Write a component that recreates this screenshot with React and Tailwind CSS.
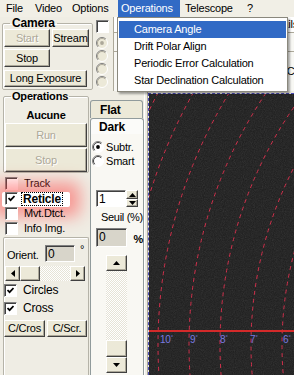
import React from 'react'

const raised =
  'bg-[#ece9d8] border border-t-white border-l-white border-r-[#404040] border-b-[#404040] shadow-[inset_-1px_-1px_0_#aca899]'
const sunken =
  'border border-t-[#808080] border-l-[#808080] border-r-white border-b-white shadow-[inset_1px_1px_0_#404040]'

function Btn({ cls, disabled, children }) {
  return (
    <div
      className={`${raised} ${cls} flex shrink-0 items-center justify-center ${
        disabled ? 'text-[#aca899] [text-shadow:1px_1px_0_#fff]' : ''
      }`}
    >
      {children}
    </div>
  )
}

function Check({ on }) {
  return (
    <span className={`${sunken} flex h-[13px] w-[13px] shrink-0 items-center justify-center bg-white`}>
      {on && (
        <svg width="7" height="7" viewBox="0 0 7 7">
          <path d="M0.5 3 L2.6 5.2 L6.5 1" stroke="#000" strokeWidth="1.7" fill="none" />
        </svg>
      )}
    </span>
  )
}

function Radio({ on, disabled }) {
  return (
    <svg width="12" height="12" viewBox="0 0 12 12" className="shrink-0">
      <circle cx="6" cy="6" r="5.5" fill={disabled ? '#ece9d8' : '#fff'} />
      <path d="M9.9 2.1 A5.5 5.5 0 0 0 2.1 9.9" stroke="#808080" fill="none" />
      <path d="M2.1 9.9 A5.5 5.5 0 0 0 9.9 2.1" stroke="#fff" fill="none" />
      <path d="M9.2 2.8 A4.5 4.5 0 0 0 2.8 9.2" stroke={disabled ? '#aca899' : '#404040'} fill="none" />
      {on && <circle cx="6" cy="6" r="1.9" fill={disabled ? '#aca899' : '#000'} />}
    </svg>
  )
}

function Arrow({ dir }) {
  const pts = {
    up: '0,4 3.5,0 7,4',
    down: '0,0 3.5,4 7,0',
    left: '4,0 0,3.5 4,7',
    right: '0,0 4,3.5 0,7',
  }[dir]
  const vert = dir === 'up' || dir === 'down'
  return (
    <svg width={vert ? 7 : 4} height={vert ? 4 : 7} viewBox={vert ? '0 0 7 4' : '0 0 4 7'}>
      <polygon points={pts} fill="#000" />
    </svg>
  )
}

const track = 'bg-[repeating-conic-gradient(#ffffff_0_25%,#e6e3d6_0_50%)] bg-[length:2px_2px]'

function MenuBar() {
  return (
    <div className="flex h-[17px] items-stretch bg-[#f1efe6]">
      <div className="flex w-[29px] items-center pl-[6px]">File</div>
      <div className="flex w-[37px] items-center pl-[6px]">Video</div>
      <div className="flex w-[52px] items-center pl-[6px]">Options</div>
      <div className="flex w-[62px] items-center bg-[#316ac5] pl-[3px] text-white">Operations</div>
      <div className="flex w-[62px] items-center pl-[5px]">Telescope</div>
      <div className="flex items-center pl-[5px]">?</div>
    </div>
  )
}

function OpsMenu() {
  const items = ['Camera Angle', 'Drift Polar Align', 'Periodic Error Calculation', 'Star Declination Calculation']
  return (
    <div className="absolute left-[117px] top-[17px] w-[171px] border border-[#8a887d] bg-white px-[1px] pb-[2px] pt-[3px] shadow-[2px_2px_2px_rgba(0,0,0,0.35)]">
      {items.map((t, i) => (
        <div
          key={t}
          className={`flex h-[17px] items-center pl-[15px] ${i === 0 ? 'bg-[#316ac5] text-white' : ''}`}
        >
          {t}
        </div>
      ))}
    </div>
  )
}

function Reticle() {
  // rings centred off to the right of the frame
  const cx = 491
  const cy = 251
  const rings = [13, 12, 11, 10, 9, 8, 7, 6, 5, 4]
  const labels = [
    [10, 11],
    [9, 41],
    [8, 71],
    [7, 101],
    [6, 134],
  ]
  return (
    <svg width="145" height="281" viewBox="0 0 145 281" className="block">
      <defs>
        <filter id="grain" x="0" y="0" width="100%" height="100%">
          <feTurbulence type="fractalNoise" baseFrequency="0.9" numOctaves="2" seed="4" />
          <feColorMatrix type="saturate" values="0" />
        </filter>
      </defs>
      <rect width="145" height="281" fill="#1c1c1c" />
      <rect width="145" height="281" filter="url(#grain)" opacity="0.15" />
      {rings.map((n) => (
        <circle
          key={n}
          cx={cx}
          cy={cy}
          r={482 - (10 - n) * 31}
          fill="none"
          stroke="#d3304c"
          strokeWidth="1"
          strokeDasharray="4 4"
        />
      ))}
      <rect x="0" y="236" width="145" height="2" fill="#d42a2a" />
      {labels.map(([n, x]) => (
        <text key={n} x={x} y={249} fontSize="10" fill="#7a7ae0" fontFamily="Liberation Sans, Arial, sans-serif">
          {n}
          <tspan fontSize="6" dy="-4">
            °
          </tspan>
        </text>
      ))}
    </svg>
  )
}

export default function App() {
  return (
    <div className="relative h-[375px] w-[294px] select-none overflow-hidden bg-[#efede4] font-['Liberation_Sans',Arial,sans-serif] text-[11px] leading-none tracking-[-0.2px] text-black">
      <MenuBar />

      {/* top strip: camera + panels under the menu */}
      <div className="flex h-[74px]">
        <fieldset className="ml-[2px] h-[73px] w-[91px] min-w-0 rounded-[2px] border border-[#b5b3a8] px-[1px] shadow-[inset_1px_1px_0_#fff]">
          <legend className="ml-[6px] px-[2px] text-[12px] font-bold leading-[13px]">Camera</legend>
          <div className="-mt-[1px] flex gap-[2px]">
            <Btn cls="h-[18px] w-[46px]" disabled>
              Start
            </Btn>
            <Btn cls="h-[18px] w-[37px]">Stream</Btn>
          </div>
          <Btn cls="mt-[2px] h-[18px] w-[46px]">Stop</Btn>
          <Btn cls="mt-[3px] h-[17px] w-[83px]">Long Exposure</Btn>
        </fieldset>

        <div className="flex w-[21px] flex-col items-start border-r border-[#aca899] pl-[3px]">
          <span className="mt-[3px]">
            <Check />
          </span>
          <div className="mt-[4px] flex flex-col gap-[1px]">
            <Radio on disabled />
            <Radio disabled />
            <Radio disabled />
            <Radio disabled />
          </div>
        </div>

        <div className="flex flex-1 flex-col overflow-hidden bg-[#f8f8f4]">
          <div className="flex h-[16px] items-center justify-end border-b border-[#aca899] bg-white">
            <span className="-mr-[4px]">Details</span>
          </div>
          <div className="h-[19px] border-b border-[#aca899]" />
          <div className="flex flex-1 items-center justify-end">
            <span className="-mr-[22px]">Calcul</span>
          </div>
        </div>
      </div>

      {/* main area */}
      <div className="flex h-[284px]">
        {/* left column */}
        <div className="flex w-[90px] flex-col">
          <fieldset className="ml-[3px] w-[86px] min-w-0 rounded-[2px] border border-[#b5b3a8] px-[1px] shadow-[inset_1px_1px_0_#fff]">
            <legend className="ml-[6px] px-[1px] font-bold leading-[11px]">Operations</legend>
            <div className="mt-[8px] text-center font-bold">Aucune</div>
            <Btn cls="mt-[2px] h-[24px] w-[82px]" disabled>
              Run
            </Btn>
            <Btn cls="mt-[1px] h-[24px] w-[82px]" disabled>
              Stop
            </Btn>
          </fieldset>

          <div className="mt-[4px] flex flex-col pl-[5px]">
            <div className="flex h-[15px] items-start gap-[6px]">
              <Check />
              <span className="leading-[13px]">Track</span>
            </div>
            <div className="-ml-[3px] flex h-[15px] w-[68px] items-start gap-[3px] rounded-[2px] bg-white pl-[3px] shadow-[0_0_16px_10px_rgba(255,70,70,0.5)]">
              <Check on />
              <span className="border border-dotted border-black px-[1px] text-[12px] font-bold leading-[12px]">
                Reticle
              </span>
            </div>
            <div className="flex h-[15px] items-start gap-[6px]">
              <Check />
              <span className="leading-[13px]">Mvt.Dtct.</span>
            </div>
            <div className="flex h-[15px] items-start gap-[6px]">
              <Check />
              <span className="leading-[13px]">Info Img.</span>
            </div>
          </div>

          <div className="ml-[3px] flex w-[86px] flex-1 flex-col rounded-t-[2px] border border-b-0 border-[#b5b3a8] shadow-[inset_1px_1px_0_#fff]">
            <div className="mt-[7px] flex items-start">
              <span className="ml-[3px] mt-[5px] w-[38px]">Orient.</span>
              <div className={`${sunken} h-[17px] w-[30px] bg-[#d8d5ca] pl-[2px] pt-[2px] text-[12px]`}>0</div>
              <span className="-mt-[1px] ml-[5px]">°</span>
            </div>
            <div className="ml-[1px] mt-[4px] flex h-[15px] w-[80px]">
              <Btn cls="h-[15px] w-[15px]">
                <Arrow dir="left" />
              </Btn>
              <Btn cls="h-[15px] w-[20px]" />
              <div className={`flex-1 ${track}`} />
              <Btn cls="h-[15px] w-[15px]">
                <Arrow dir="right" />
              </Btn>
            </div>
            <div className="mt-[3px] flex h-[18px] items-start gap-[6px]">
              <Check on />
              <span className="text-[12px] leading-[13px]">Circles</span>
            </div>
            <div className="flex h-[18px] items-start gap-[6px]">
              <Check on />
              <span className="text-[12px] leading-[13px]">Cross</span>
            </div>
            <div className="flex gap-[2px]">
              <Btn cls="h-[17px] w-[41px]">C/Cros</Btn>
              <Btn cls="h-[17px] w-[40px]">C/Scr.</Btn>
            </div>
          </div>
        </div>

        {/* middle column: tabs */}
        <div className="flex w-[54px] flex-col pt-[9px]">
          <div className="h-[18px] w-[53px] rounded-t-[3px] border border-b-0 border-[#919b9c] bg-[#ece9d8] pl-[9px] pt-[3px] text-[12px] font-bold">
            Flat
          </div>
          <div className="h-[16px] w-[54px] rounded-t-[3px] border border-b-0 border-[#919b9c] bg-[#fbfbf9] pl-[8px] pt-[2px] text-[12px] font-bold">
            Dark
          </div>
          <div className="flex flex-1 flex-col border-x border-[#919b9c] bg-[#f9f8f3] pl-[1px]">
            <div className="mt-[7px] flex h-[14px] items-start gap-[2px]">
              <Radio on />
              <span className="leading-[12px]">Subtr.</span>
            </div>
            <div className="flex h-[14px] items-start gap-[2px]">
              <Radio />
              <span className="leading-[12px]">Smart</span>
            </div>

            <div className="ml-[4px] mt-[21px] flex">
              <div className={`${sunken} h-[17px] w-[30px] bg-white pl-[2px] pt-[2px] text-[12px]`}>1</div>
              <div className="flex w-[12px] flex-col">
                <Btn cls="h-[9px] w-[12px]">
                  <Arrow dir="up" />
                </Btn>
                <Btn cls="h-[8px] w-[12px]">
                  <Arrow dir="down" />
                </Btn>
              </div>
            </div>
            <div className="ml-[9px] mt-[5px] whitespace-nowrap tracking-[-0.3px]">Seuil (%)</div>
            <div className="ml-[4px] mt-[5px] flex items-end">
              <div className={`${sunken} h-[19px] w-[33px] bg-[#d8d5ca] pl-[2px] pt-[2px] text-[12px]`}>0</div>
              <span className="mb-[2px] ml-[6px] font-bold">%</span>
            </div>
            <div className="ml-[14px] mt-[8px] flex w-[21px] flex-1 flex-col">
              <Btn cls="h-[16px] w-[21px]">
                <Arrow dir="up" />
              </Btn>
              <div className={`h-[69px] ${track}`} />
              <Btn cls="h-[17px] w-[21px]" />
              <Btn cls="h-[16px] w-[21px]">
                <Arrow dir="down" />
              </Btn>
            </div>
          </div>
        </div>

        {/* splitter */}
        <div className="w-[4px] border-l border-r border-l-white border-r-[#aca899]" />

        {/* image */}
        <div className="mt-[2px] flex-1 overflow-hidden border-l border-t border-dashed border-[#4a4ab8]">
          <Reticle />
        </div>
      </div>

      <OpsMenu />
    </div>
  )
}
